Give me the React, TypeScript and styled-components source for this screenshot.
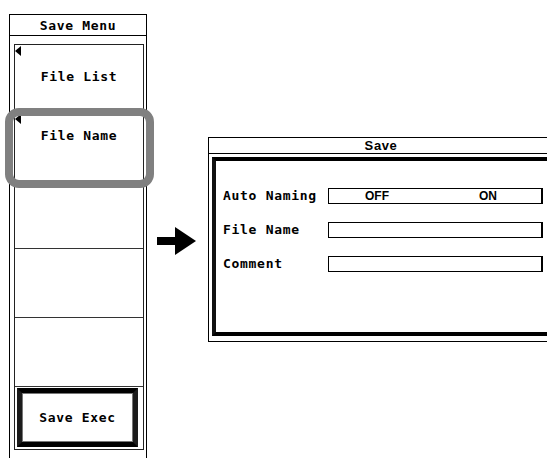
import styled, { createGlobalStyle } from "styled-components"

const GlobalStyle = createGlobalStyle`
    body {
        margin: 0;
        background: #fff;
        overflow: hidden;
    }
`

const mono = `"DejaVu Sans Mono", "Liberation Mono", monospace`
const sans = `"Liberation Sans", Arial, sans-serif`

const PageStyled = styled.div`
    display: flex;
    align-items: flex-start;
    width: 547px;
    height: 458px;
    overflow: hidden;
    box-sizing: border-box;
    padding: 14px 0 0 9px;
    color: #000;
`

const MenuStyled = styled.div`
    flex-shrink: 0;
    width: 138px;
    height: 460px;
    border: 1px solid #000;
    box-sizing: border-box;
`

const MenuTitleStyled = styled.div`
    height: 20px;
    border-bottom: 1px solid #000;
    display: flex;
    align-items: center;
    justify-content: center;
    font-family: ${mono};
    font-weight: bold;
    font-size: 13px;
    letter-spacing: 0.7px;
`

const MenuPanelStyled = styled.div`
    margin: 8px 2px 0 4px;
    border: 1px solid #222;
`

const SoftKeyStyled = styled.div<{ $height: number; $top: number; $last?: boolean }>`
    position: relative;
    height: ${({ $height }) => $height}px;
    box-sizing: border-box;
    padding-top: ${({ $top }) => $top}px;
    border-bottom: ${({ $last }) => ($last ? "none" : "1px solid #333")};
    text-align: center;
    font-family: ${mono};
    font-weight: bold;
    font-size: 13px;
    line-height: 14px;
    letter-spacing: 0.7px;
`

const MarkerStyled = styled.span`
    position: absolute;
    left: 0;
    top: 1px;
    width: 0;
    height: 0;
    border-top: 5px solid transparent;
    border-bottom: 5px solid transparent;
    border-right: 6px solid #000;
`

const HighlightStyled = styled.div`
    position: absolute;
    left: -10px;
    top: -5px;
    width: 149px;
    height: 80px;
    box-sizing: border-box;
    border: 8px solid #808080;
    border-radius: 14px;
    z-index: 2;
`

const ExecButtonStyled = styled.div`
    margin: 1px 0 0 2px;
    width: 121px;
    height: 59px;
    box-sizing: border-box;
    border: 5px solid;
    border-color: #000 #1c1c1c #000 #1c1c1c;
    outline: 1px solid #777;
    outline-offset: -6px;
    display: flex;
    align-items: center;
    justify-content: center;
    font-family: ${mono};
    font-weight: bold;
    font-size: 13px;
    letter-spacing: 0.7px;
`

const ArrowStyled = styled.div`
    flex-shrink: 0;
    margin: 213px 0 0 8px;
    width: 42px;
    height: 28px;
`

const DialogStyled = styled.div`
    flex-shrink: 0;
    margin: 123px 0 0 11px;
    width: 346px;
    height: 205px;
    box-sizing: border-box;
    border: 1px solid #000;
`

const DialogTitleStyled = styled.div`
    height: 15px;
    border-bottom: 1px solid #000;
    display: flex;
    align-items: center;
    justify-content: center;
    font-family: ${sans};
    font-weight: bold;
    font-size: 13px;
    letter-spacing: 0.6px;
`

const FrameStyled = styled.div`
    margin: 3px 0 0 3px;
    width: 340px;
    height: 179px;
    box-sizing: border-box;
    border: 4px solid;
    border-color: #000 #111 #000 #111;
    padding: 27px 0 0 7px;
`

const FormGridStyled = styled.div`
    display: grid;
    grid-template-columns: 105px 215px;
    grid-auto-rows: 16px;
    row-gap: 18px;
    align-items: center;
`

const FieldLabelStyled = styled.div`
    font-family: ${mono};
    font-weight: bold;
    font-size: 13px;
    line-height: 16px;
    letter-spacing: 0.7px;
`

const FieldBoxStyled = styled.div`
    height: 16px;
    box-sizing: border-box;
    border: 1px solid #000;
    border-right-width: 2px;
`

const ToggleBoxStyled = styled(FieldBoxStyled)`
    display: grid;
    grid-template-columns: 1fr 1fr;
    align-items: center;
    font-family: ${sans};
    font-weight: bold;
    font-size: 12px;
    line-height: 14px;

    & > span {
        text-align: center;
    }

    & > span:first-child {
        padding-right: 10px;
    }
`

const Arrow = () => (
    <svg width="42" height="28" viewBox="0 0 42 28">
        <rect x="2" y="10" width="20" height="8" fill="#000" />
        <polygon points="20,0 41,14 20,28" fill="#000" />
    </svg>
)

export default function App() {
    return (
        <>
            <GlobalStyle />
            <PageStyled>
                <MenuStyled>
                    <MenuTitleStyled>Save Menu</MenuTitleStyled>
                    <MenuPanelStyled>
                        <SoftKeyStyled $height={68} $top={25}>
                            <MarkerStyled />
                            File List
                        </SoftKeyStyled>
                        <SoftKeyStyled $height={68} $top={16}>
                            <MarkerStyled />
                            File Name
                            <HighlightStyled />
                        </SoftKeyStyled>
                        <SoftKeyStyled $height={68} $top={0} />
                        <SoftKeyStyled $height={69} $top={0} />
                        <SoftKeyStyled $height={69} $top={0} />
                        <SoftKeyStyled $height={61} $top={0} $last>
                            <ExecButtonStyled>Save Exec</ExecButtonStyled>
                        </SoftKeyStyled>
                    </MenuPanelStyled>
                </MenuStyled>

                <ArrowStyled>
                    <Arrow />
                </ArrowStyled>

                <DialogStyled>
                    <DialogTitleStyled>Save</DialogTitleStyled>
                    <FrameStyled>
                        <FormGridStyled>
                            <FieldLabelStyled>Auto Naming</FieldLabelStyled>
                            <ToggleBoxStyled>
                                <span>OFF</span>
                                <span>ON</span>
                            </ToggleBoxStyled>
                            <FieldLabelStyled>File Name</FieldLabelStyled>
                            <FieldBoxStyled />
                            <FieldLabelStyled>Comment</FieldLabelStyled>
                            <FieldBoxStyled />
                        </FormGridStyled>
                    </FrameStyled>
                </DialogStyled>
            </PageStyled>
        </>
    )
}
